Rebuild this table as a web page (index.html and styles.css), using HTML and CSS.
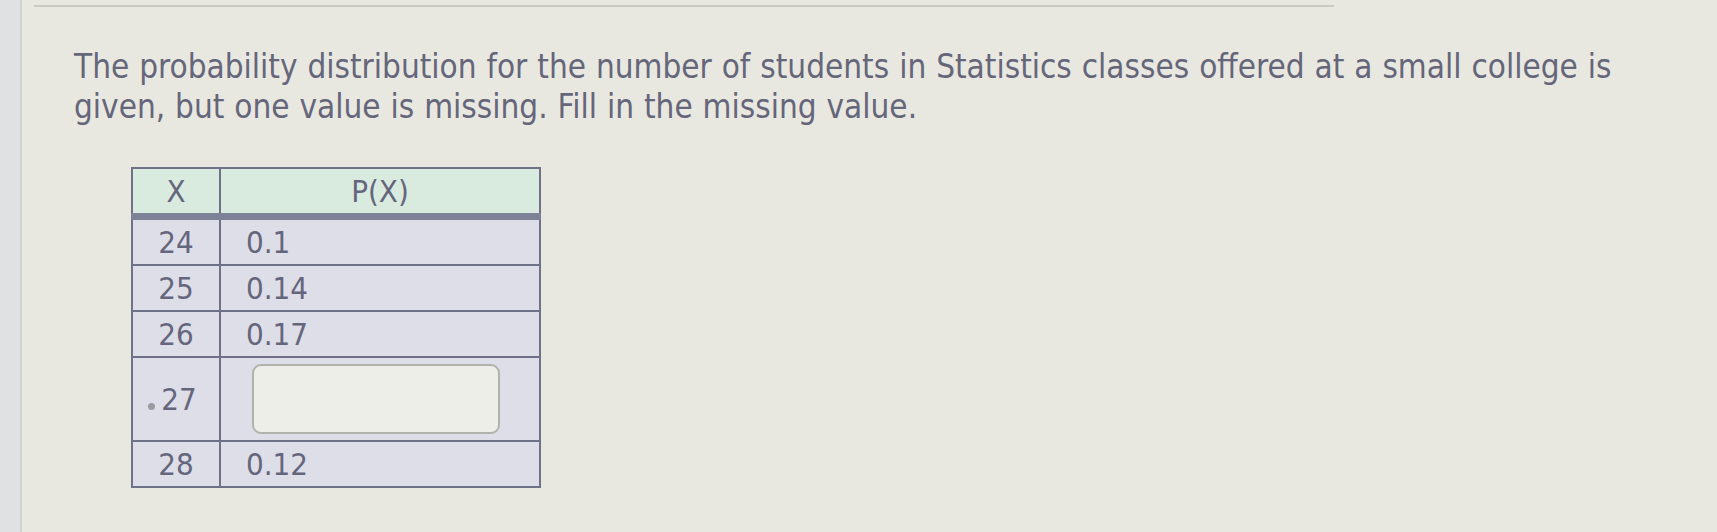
FILE: index.html
```html
<!DOCTYPE html>
<html>
<head>
<meta charset="utf-8">
<link rel="stylesheet" href="styles.css">
</head>
<body>
<div class="page">
  <div class="edge"></div>
  <main class="main">
    <div class="rule"></div>
    <p class="question">The probability distribution for the number of students in Statistics classes offered at a small college is given, but one value is missing. Fill in the missing value.</p>
    <table class="dist">
      <thead>
        <tr><th class="cx">X</th><th class="cp">P(X)</th></tr>
      </thead>
      <tbody>
        <tr><td class="cx">24</td><td class="cp">0.1</td></tr>
        <tr><td class="cx">25</td><td class="cp">0.14</td></tr>
        <tr><td class="cx">26</td><td class="cp">0.17</td></tr>
        <tr class="tall"><td class="cx cx-pad"><span class="dot"></span>27</td><td class="cp"><input class="answer" type="text" aria-label="P(27)"></td></tr>
        <tr><td class="cx">28</td><td class="cp">0.12</td></tr>
      </tbody>
    </table>
  </main>
</div>
</body>
</html>
```

FILE: styles.css
```css
html, body {
  margin: 0;
  padding: 0;
  background: #e8e8e1;
}
.page {
  display: flex;
  width: 1717px;
  height: 532px;
  overflow: hidden;
  font-family: "DejaVu Sans Condensed", "DejaVu Sans", sans-serif;
  color: #65667a;
}
.edge {
  width: 20px;
  flex: none;
  background: #dfe1e2;
  border-right: 2px solid #cfd1d2;
}
.main {
  flex: 1;
  padding-left: 52px;
}
.rule {
  margin: 5px 0 0 -40px;
  width: 1300px;
  height: 2px;
  background: #c9c9c3;
}
.question {
  margin: 40px 0 0 0;
  width: 1600px;
  font-size: 33px;
  line-height: 40px;
  letter-spacing: 0;
  word-spacing: 0.5px;
}
.dist {
  margin: 40px 0 0 57px;
  border-collapse: collapse;
  font-size: 31px;
  color: #65667d;
}
.dist th, .dist td {
  border: 2px solid #6f7188;
  padding: 0;
  height: 44px;
  font-weight: normal;
}
.dist th {
  background: #d9eadf;
  text-align: center;
}
.dist thead th {
  border-bottom: 7px solid #7e8296;
}
.dist td {
  background: #dddee7;
}
.cx {
  width: 86px;
  text-align: center;
}
th.cp {
  width: 318px;
}
td.cp {
  width: 293px;
  padding-left: 25px;
}
.tall td {
  height: 82px;
}
.tall td.cx {
  position: relative;
}
.dist td.cx-pad {
  width: 80px;
  padding-left: 6px;
}
.dot {
  position: absolute;
  left: 15px;
  top: 45px;
  width: 7px;
  height: 7px;
  border-radius: 50%;
  background: #9a9aa0;
}
.answer {
  display: block;
  box-sizing: border-box;
  width: 248px;
  height: 70px;
  margin: 0 0 0 6px;
  border: 2px solid #b2b2ad;
  border-radius: 9px;
  background: #eeeee9;
  outline: none;
}
```
